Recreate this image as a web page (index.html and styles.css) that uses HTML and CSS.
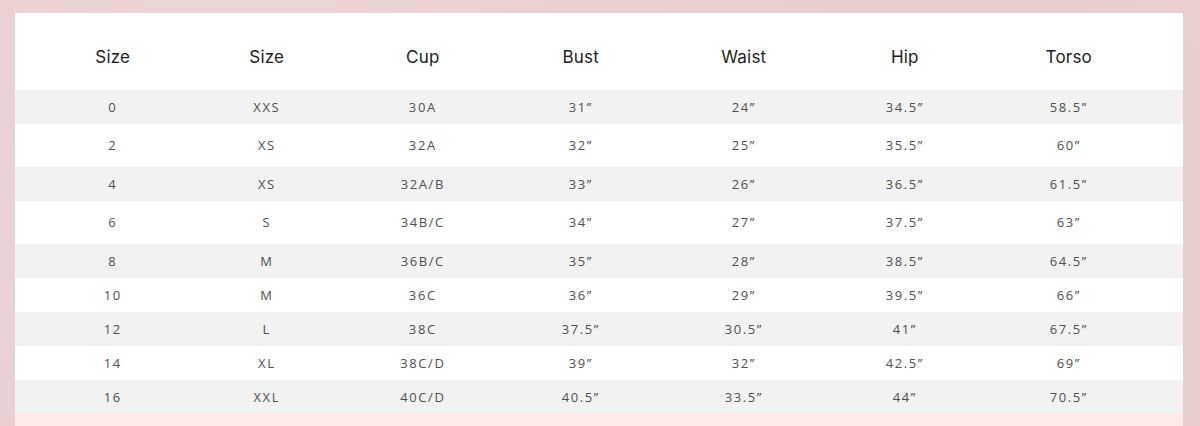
FILE: index.html
```html
<!DOCTYPE html>
<html lang="en">
<head>
<meta charset="utf-8">
<title>Size Chart</title>
<link rel="stylesheet" href="styles.css">
</head>
<body>
<div class="card">
  <div class="row head">
    <div>Size</div><div>Size</div><div>Cup</div><div>Bust</div><div>Waist</div><div>Hip</div><div>Torso</div>
  </div>
  <div class="row shade"><div>0</div><div>XXS</div><div>30A</div><div>31”</div><div>24”</div><div>34.5”</div><div>58.5”</div></div>
  <div class="row tall"><div>2</div><div>XS</div><div>32A</div><div>32”</div><div>25”</div><div>35.5”</div><div>60”</div></div>
  <div class="row shade"><div>4</div><div>XS</div><div>32A/B</div><div>33”</div><div>26”</div><div>36.5”</div><div>61.5”</div></div>
  <div class="row tall"><div>6</div><div>S</div><div>34B/C</div><div>34”</div><div>27”</div><div>37.5”</div><div>63”</div></div>
  <div class="row shade"><div>8</div><div>M</div><div>36B/C</div><div>35”</div><div>28”</div><div>38.5”</div><div>64.5”</div></div>
  <div class="row"><div>10</div><div>M</div><div>36C</div><div>36”</div><div>29”</div><div>39.5”</div><div>66”</div></div>
  <div class="row shade"><div>12</div><div>L</div><div>38C</div><div>37.5”</div><div>30.5”</div><div>41”</div><div>67.5”</div></div>
  <div class="row"><div>14</div><div>XL</div><div>38C/D</div><div>39”</div><div>32”</div><div>42.5”</div><div>69”</div></div>
  <div class="row shade"><div>16</div><div>XXL</div><div>40C/D</div><div>40.5”</div><div>33.5”</div><div>44”</div><div>70.5”</div></div>
  <div class="pink"></div>
</div>
</body>
</html>
```

FILE: styles.css
```css
html, body {
  margin: 0;
  padding: 0;
}
body {
  width: 1200px;
  height: 426px;
  overflow: hidden;
  background-color: #e9d0d1;
  background-image:
    radial-gradient(circle at 20% 30%, rgba(255,255,255,0.12), transparent 40%),
    radial-gradient(circle at 80% 70%, rgba(200,170,170,0.15), transparent 45%);
  padding: 13px 17px 0 15px;
  box-sizing: border-box;
}
.card {
  background: #ffffff;
  width: 1168px;
  height: 413px;
  display: flex;
  flex-direction: column;
}
.row {
  display: grid;
  grid-template-columns: 164px 144px 168px 148px 178px 144px 184px;
  padding-left: 15px;
  height: 34.5px;
  flex: none;
  align-items: center;
  justify-items: center;
  font-family: "Open Sans", "Liberation Sans", sans-serif;
  font-size: 13px;
  letter-spacing: 1.6px;
  color: #4f4f4f;
}
.row > div {
  padding-left: 1.6px;
}
.row.head {
  height: 77px;
  font-family: "Inter", "Liberation Sans", sans-serif;
  font-size: 17px;
  letter-spacing: 0.2px;
  color: #1c1c1c;
  padding-top: 10px;
  box-sizing: border-box;
}
.row.shade {
  background: #f2f2f2;
  height: 33.5px;
}
.row.tall {
  height: 43.5px;
}
.pink {
  background: #fde9e5;
  flex: 1;
}
```
